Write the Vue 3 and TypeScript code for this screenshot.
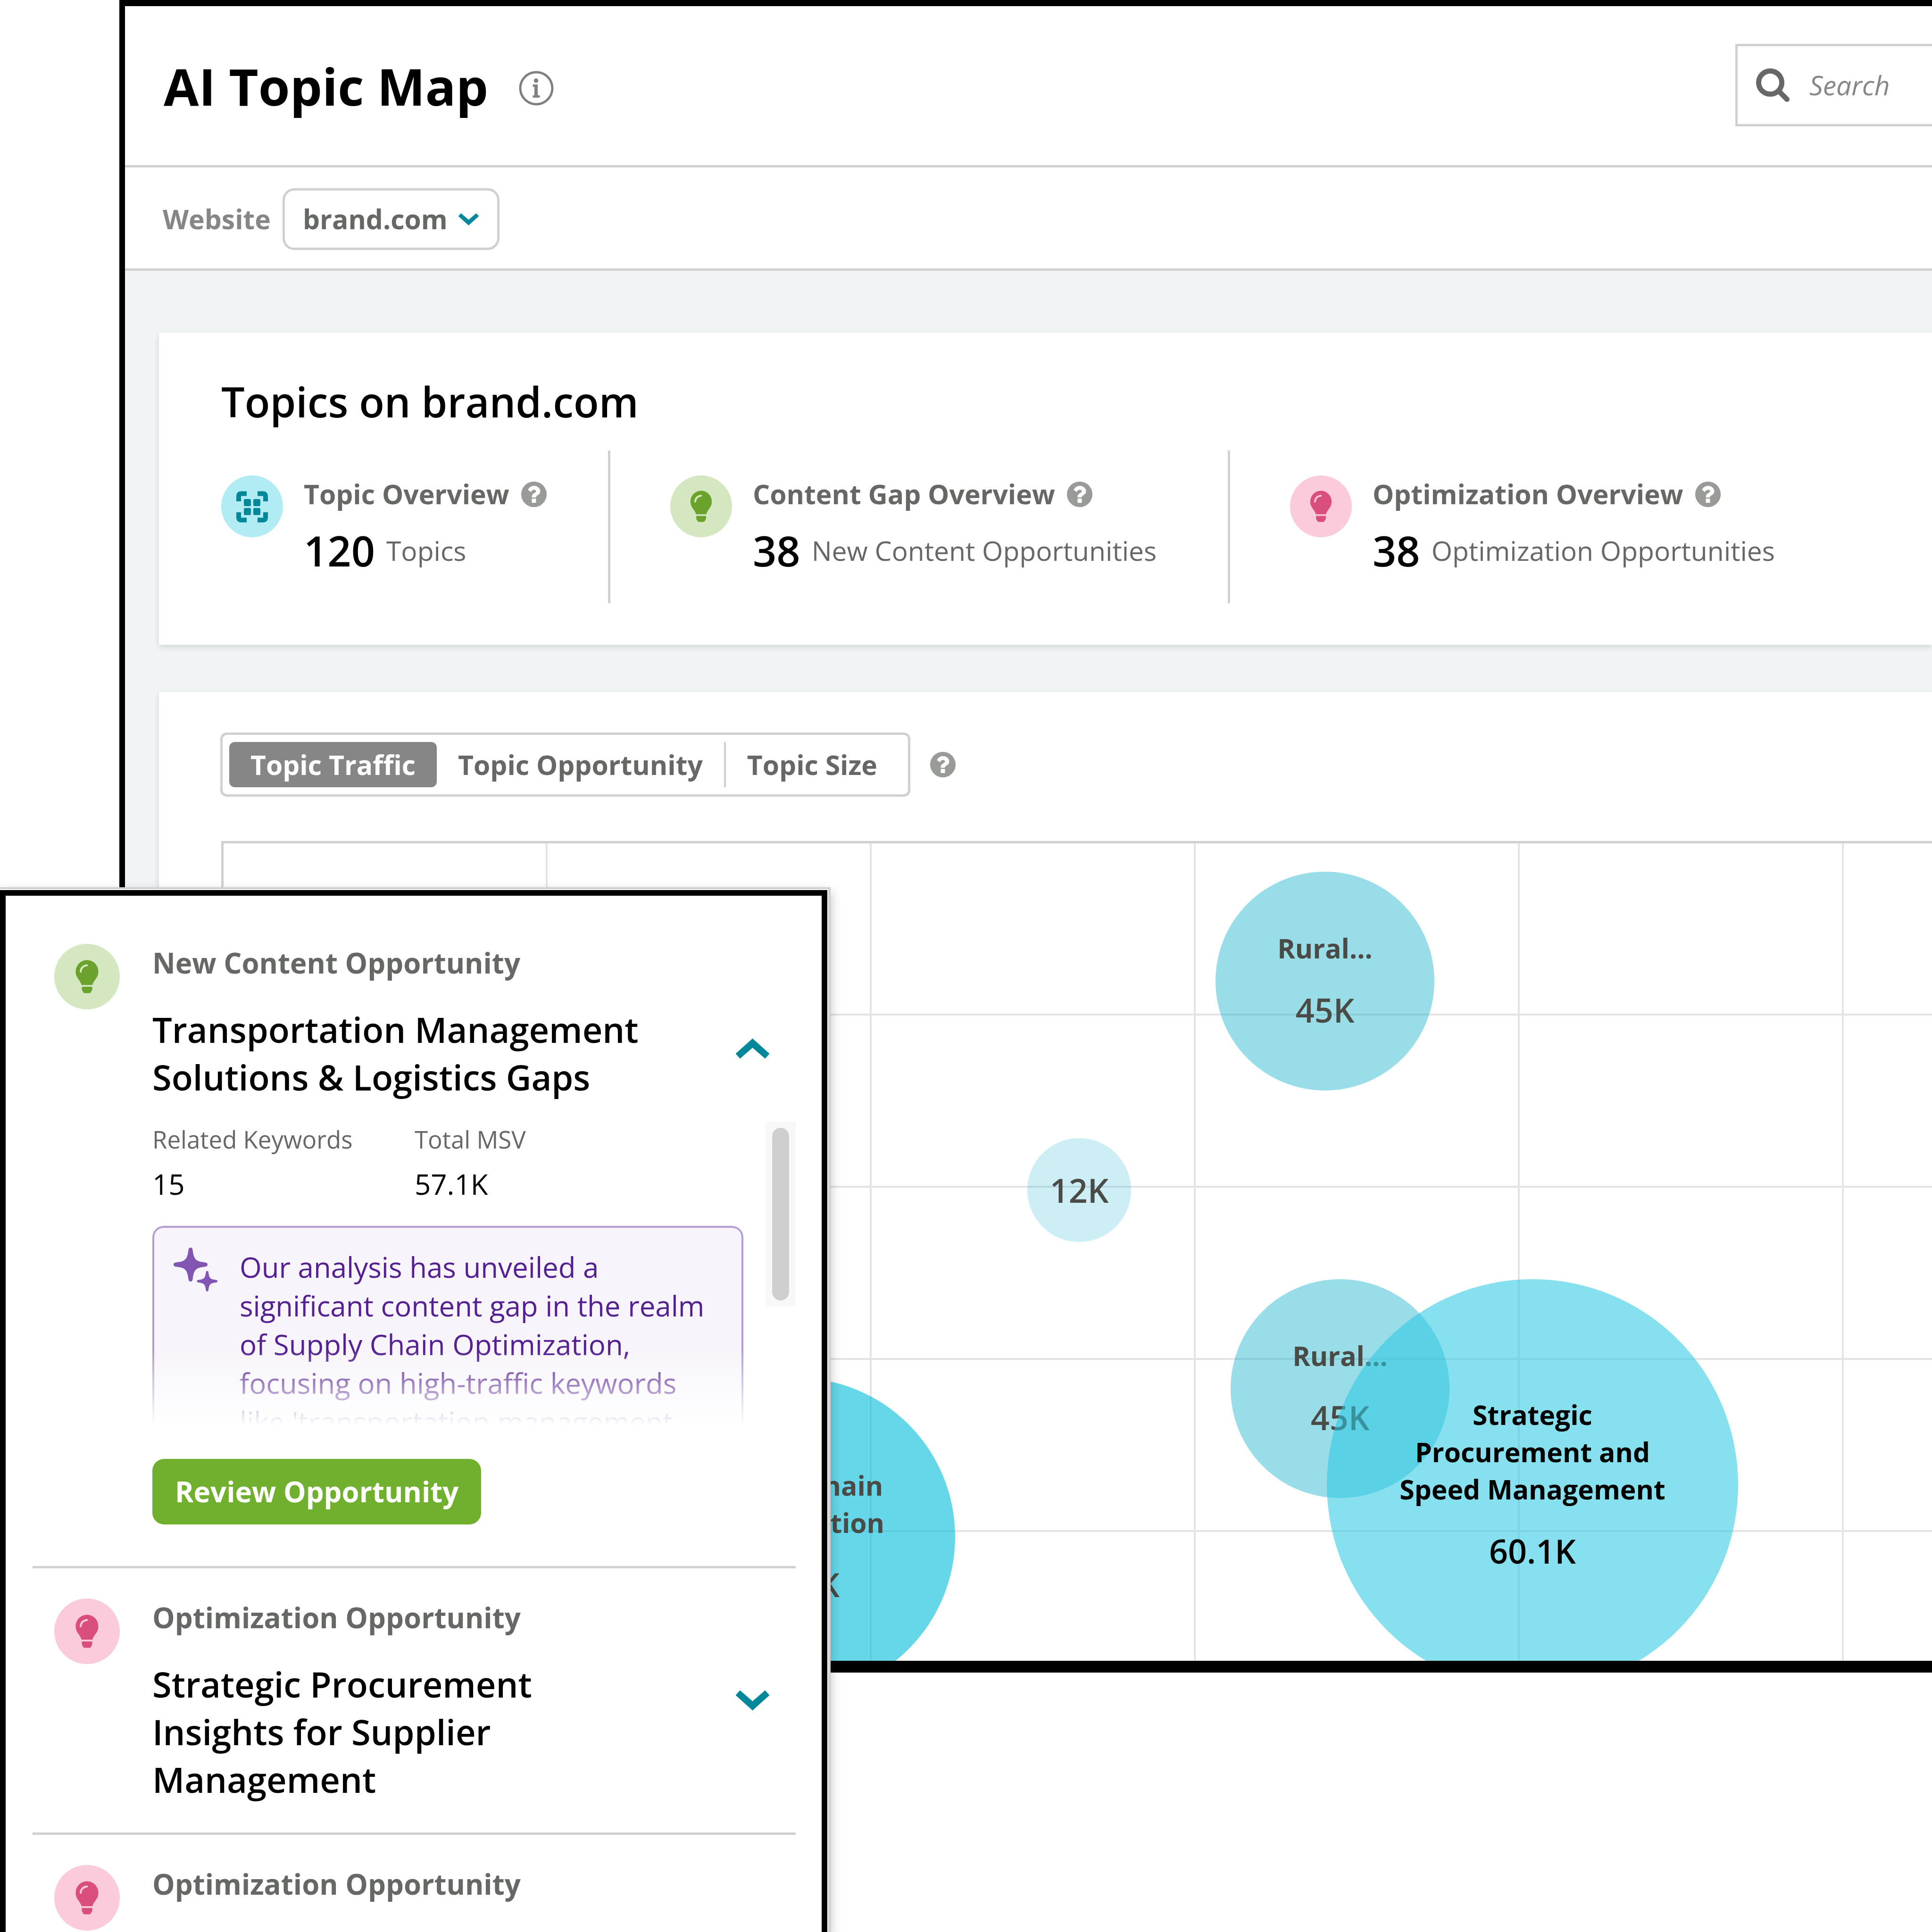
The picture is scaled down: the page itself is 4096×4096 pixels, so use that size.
<script setup lang="ts">
import { ref } from 'vue'

interface Stat {
  kind: 'topic' | 'gap' | 'optimize'
  label: string
  value: number
  unit: string
}

interface Bubble {
  name: string
  value: string
  x: number
  y: number
  size: number
  fill: string
  strong?: boolean
}

interface Opportunity {
  kind: 'gap' | 'optimize'
  label: string
  title: string
  keywords?: string
  msv?: string
  insight?: string
}

const website = ref('brand.com')
const query = ref('')
const metric = ref('Topic Traffic')
const metrics = ['Topic Traffic', 'Topic Opportunity', 'Topic Size']

const stats: Stat[] = [
  { kind: 'topic', label: 'Topic Overview', value: 120, unit: 'Topics' },
  { kind: 'gap', label: 'Content Gap Overview', value: 38, unit: 'New Content Opportunities' },
  { kind: 'optimize', label: 'Optimization Overview', value: 38, unit: 'Optimization Opportunities' },
]

// x and y are bubble centres inside the chart
const bubbles: Bubble[] = [
  { name: 'Rural...', value: '45K', x: 2335, y: 292, size: 464, fill: 'rgba(0, 170, 198, 0.4)' },
  { name: '', value: '12K', x: 1814, y: 735, size: 220, fill: 'rgba(0, 170, 198, 0.2)' },
  { name: 'Supply Chain Optimization', value: '57.1K', x: 1214, y: 1470, size: 674, fill: 'rgba(0, 188, 217, 0.6)' },
  { name: 'Rural...', value: '45K', x: 2367, y: 1156, size: 464, fill: 'rgba(0, 170, 198, 0.4)' },
  { name: 'Strategic Procurement and Speed Management', value: '60.1K', x: 2775, y: 1360, size: 872, fill: 'rgba(43, 201, 225, 0.57)', strong: true },
]

const opportunities: Opportunity[] = [
  {
    kind: 'gap',
    label: 'New Content Opportunity',
    title: 'Transportation Management Solutions & Logistics Gaps',
    keywords: '15',
    msv: '57.1K',
    insight:
      "Our analysis has unveiled a significant content gap in the realm of Supply Chain Optimization, focusing on high-traffic keywords like 'transportation management",
  },
  { kind: 'optimize', label: 'Optimization Opportunity', title: 'Strategic Procurement Insights for Supplier Management' },
  { kind: 'optimize', label: 'Optimization Opportunity', title: '' },
]

const place = (b: Bubble) => ({
  left: `${b.x - b.size / 2}px`,
  top: `${b.y - b.size / 2}px`,
  width: `${b.size}px`,
  height: `${b.size}px`,
  background: b.fill,
})

const helpPath =
  'M1024 1376v-192q0-14-9-23t-23-9h-192q-14 0-23 9t-9 23v192q0 14 9 23t23 9h192q14 0 23-9t9-23zm256-672q0-88-55.5-163t-138.5-116-170-41q-243 0-371 213-15 24 8 42l132 100q7 6 19 6 16 0 25-12 53-68 86-92 34-24 86-24 48 0 85.5 26t37.5 59q0 38-20 61t-68 45q-63 28-115.5 86.5t-52.5 125.5v36q0 14 9 23t23 9h192q14 0 23-9t9-23q0-19 21.5-49.5t54.5-49.5q32-18 49-28.5t46-35 44.5-48 28-60.5 12.5-81zm384 192q0 209-103 385.5t-279.5 279.5-385.5 103-385.5-103-279.5-279.5-103-385.5 103-385.5 279.5-279.5 385.5-103 385.5 103 279.5 279.5 103 385.5z'
const searchPath =
  'M1216 832q0-185-131.5-316.5t-316.5-131.5-316.5 131.5-131.5 316.5 131.5 316.5 316.5 131.5 316.5-131.5 131.5-316.5zm512 832q0 52-38 90t-90 38q-54 0-90-38l-343-342q-179 124-399 124-143 0-273.5-55.5t-225-150-150-225-55.5-273.5 55.5-273.5 150-225 225-150 273.5-55.5 273.5 55.5 225 150 150 225 55.5 273.5q0 220-124 399l343 343q37 37 37 90z'
const bulbPath =
  'M24 0C10.7 0 0 10.7 0 24.5C0 38 9 41 12.5 52.7H35.5C39 41 48 38 48 24.5C48 10.7 37.3 0 24 0ZM13 56.5H35V62C35 63 34.700 63.800 34.200 64.600L31.800 68.500C31.200 69.500 30.300 70 29.200 70H18.800C17.700 70 16.800 69.500 16.200 68.500L13.800 64.600C13.300 63.800 13 63 13 62Z'
const sparkPath =
  'M36 0C38.500 0 40 1.500 40.500 5C43 25 47 29.500 67 31.500C70.500 32 72 33.500 72 36C72 38.500 70.500 40 67 40.500C47 42.500 43 47 40.500 67C40 70.500 38.500 72 36 72C33.500 72 32 70.500 31.500 67C29 47 25 42.500 5 40.500C1.500 40 0 38.500 0 36C0 33.500 1.500 32 5 31.500C25 29.500 29 25 31.500 5C32 1.500 33.500 0 36 0Z'
</script>

<template>
  <div class="page">
    <main class="frame">
      <header class="header">
        <div class="heading">
          <h1>AI Topic Map</h1>
          <svg class="info" viewBox="0 0 74 74" role="img" aria-label="About this page">
            <circle cx="37" cy="37" r="34" fill="none" stroke="currentColor" stroke-width="5" />
            <circle cx="36.500" cy="21" r="4.700" fill="currentColor" />
            <path d="M31 29H40V52H43Q44.500 52 44.500 54V55.500Q44.500 57 43 57H31Q29.500 57 29.500 55.500V54Q29.500 52 31 52H33V34H31Q29.500 34 29.500 32.500V30.500Q29.500 29 31 29Z" fill="currentColor" />
          </svg>
        </div>
        <label class="search">
          <svg class="search-icon" viewBox="64 128 1664 1664" aria-hidden="true"><path :d="searchPath" fill="currentColor" /></svg>
          <input v-model="query" type="text" placeholder="Search" aria-label="Search" />
        </label>
      </header>

      <div class="filters">
        <label for="website">Website</label>
        <div class="select">
          <select id="website" v-model="website">
            <option>brand.com</option>
          </select>
          <svg class="select-arrow" viewBox="0 0 71 42" aria-hidden="true"><path d="M9 1L35.500 24L62 1L70 10L35.500 41L1 10Z" fill="currentColor" stroke="currentColor" stroke-width="2" stroke-linejoin="round" /></svg>
        </div>
      </div>

      <div class="content">
        <section class="card summary">
          <h2>Topics on brand.com</h2>
          <div class="stats">
            <div v-for="s in stats" :key="s.label" class="stat">
              <svg class="stat-icon" :class="s.kind" viewBox="0 0 139 139" aria-hidden="true">
                <circle class="disc" cx="69.500" cy="69.500" r="69.500" />
                <g v-if="s.kind === 'topic'" transform="scale(1.061)">
                  <path d="M54 38.500H42Q37 38.500 37 43.500V55M77 38.500H89Q94 38.500 94 43.500V55M54 94.500H42Q37 94.500 37 89.500V78M77 94.500H89Q94 94.500 94 89.500V78" fill="none" stroke="currentColor" stroke-width="10" />
                  <rect x="48" y="50" width="15" height="15" rx="3" fill="currentColor" />
                  <rect x="68" y="50" width="15" height="15" rx="3" fill="currentColor" />
                  <rect x="48" y="69" width="15" height="15" rx="3" fill="currentColor" />
                  <rect x="68" y="69" width="15" height="15" rx="3" fill="currentColor" />
                </g>
                <g v-else transform="translate(45.500 34.500)">
                  <path :d="bulbPath" fill="currentColor" />
                  <path class="shine" d="M10.500 24.500Q11.500 12.500 24 11" />
                </g>
              </svg>
              <div>
                <p class="stat-label">
                  {{ s.label }}
                  <svg class="help" viewBox="128 128 1536 1536" role="img" aria-label="Help"><path :d="helpPath" fill="currentColor" /></svg>
                </p>
                <p class="stat-value"><strong>{{ s.value }}</strong><span>{{ s.unit }}</span></p>
              </div>
            </div>
          </div>
        </section>

        <section class="card map">
          <div class="toolbar">
            <div class="segments">
              <button v-for="m in metrics" :key="m" type="button" :class="{ active: m === metric }" @click="metric = m">{{ m }}</button>
            </div>
            <svg class="help" viewBox="128 128 1536 1536" role="img" aria-label="Help"><path :d="helpPath" fill="currentColor" /></svg>
          </div>
          <div class="chart">
            <div v-for="(b, i) in bubbles" :key="i" class="bubble" :class="{ strong: b.strong }" :style="place(b)">
              <span v-if="b.name" class="bubble-name">{{ b.name }}</span>
              <span class="bubble-value">{{ b.value }}</span>
            </div>
          </div>
        </section>
      </div>
    </main>

    <aside class="panel">
      <div class="panel-body">
        <article v-for="(o, i) in opportunities" :key="i" class="item">
          <svg class="item-icon" :class="o.kind" viewBox="0 0 139 139" aria-hidden="true">
            <circle class="disc" cx="69.500" cy="69.500" r="69.500" />
            <g transform="translate(45.500 34.500)">
              <path :d="bulbPath" fill="currentColor" />
              <path class="shine" d="M10.500 24.500Q11.500 12.500 24 11" />
            </g>
          </svg>
          <div class="item-content">
            <p class="item-label">{{ o.label }}</p>
            <div v-if="o.title" class="item-head">
              <h3>{{ o.title }}</h3>
              <button type="button" class="toggle" :aria-label="o.insight ? 'Collapse' : 'Expand'">
                <svg viewBox="0 0 71 48" aria-hidden="true">
                  <path v-if="o.insight" d="M9 47L35.500 24L62 47L70 38L35.500 7L1 38Z" fill="currentColor" stroke="currentColor" stroke-width="2" stroke-linejoin="round" />
                  <path v-else d="M9 1L35.500 24L62 1L70 10L35.500 41L1 10Z" fill="currentColor" stroke="currentColor" stroke-width="2" stroke-linejoin="round" />
                </svg>
              </button>
            </div>
            <template v-if="o.insight">
              <div class="details">
                <div class="details-body">
                  <dl>
                    <div><dt>Related Keywords</dt><dd>{{ o.keywords }}</dd></div>
                    <div><dt>Total MSV</dt><dd>{{ o.msv }}</dd></div>
                  </dl>
                  <div class="insight">
                    <svg class="sparkles" viewBox="0 0 93 93" aria-hidden="true">
                      <path :d="sparkPath" fill="currentColor" />
                      <path :d="sparkPath" fill="currentColor" transform="translate(49.500 49.500) scale(0.604)" />
                    </svg>
                    <p>{{ o.insight }}</p>
                  </div>
                </div>
                <div class="scroll-track"><div class="scroll-thumb"></div></div>
              </div>
              <button type="button" class="review">Review Opportunity</button>
            </template>
          </div>
        </article>
      </div>
    </aside>
  </div>
</template>

<style>
body {
  background: #fff;
}
</style>

<style scoped>
.page {
  position: relative;
  box-sizing: border-box;
  min-height: 100vh;
  padding-left: 253px;
  overflow: hidden;
  font-family: 'Open Sans', 'Noto Sans', sans-serif;
  font-size: 57px;
  line-height: 79px;
  color: #000;
}
.page * {
  box-sizing: border-box;
}
h1, h2, h3, p, dl, dd {
  margin: 0;
}
svg {
  display: block;
  flex: none;
}
button, input, select {
  margin: 0;
  font: inherit;
  color: inherit;
}

.frame {
  border: solid #000;
  border-width: 13px 0 25px 12px;
  background: #f0f4f5;
}

.header {
  display: flex;
  align-items: center;
  justify-content: space-between;
  height: 342px;
  padding: 0 0 2px 82px;
  border-bottom: 5px solid #d0d0d0;
  background: #fff;
}
.heading {
  display: flex;
  align-items: center;
  gap: 65px;
  padding-top: 4px;
}
h1 {
  font-size: 108px;
  font-weight: 700;
  line-height: 148px;
}
.info {
  width: 74px;
  height: 74px;
  margin-top: 8px;
  color: #808080;
}
.search {
  display: flex;
  align-items: center;
  gap: 42px;
  width: 417px;
  height: 175px;
  padding-left: 39px;
  border: 5px solid #d0d0d0;
  border-right: 0;
}
.search-icon {
  width: 71px;
  height: 71px;
  color: #666866;
}
.search input {
  flex: 1;
  min-width: 0;
  padding: 0;
  border: 0;
  background: none;
  font-style: italic;
  outline: none;
}
.search input::placeholder {
  color: #868686;
  opacity: 1;
}

.filters {
  display: flex;
  align-items: center;
  gap: 25px;
  height: 219px;
  padding: 5px 0 0 80px;
  border-bottom: 5px solid #d0d0d0;
  background: #fff;
  font-weight: 700;
  color: #868686;
}
.select {
  position: relative;
  width: 460px;
}
.select select {
  display: block;
  width: 100%;
  height: 131px;
  padding: 0 38px;
  border: 5px solid #d0d0d0;
  border-radius: 25px;
  background: #fff;
  color: #666866;
  appearance: none;
}
.select-arrow {
  position: absolute;
  top: 53px;
  right: 44px;
  width: 43px;
  height: 26px;
  color: #00889a;
  pointer-events: none;
}

.content {
  display: flex;
  flex-direction: column;
  gap: 100px;
  padding: 131px 0 0 72px;
}
.card {
  padding-left: 132px;
  background: #fff;
  box-shadow: 0 5px 12px rgba(0, 0, 0, 0.12);
}
.summary {
  padding-top: 86px;
  padding-bottom: 88px;
}
h2 {
  margin-bottom: 44px;
  font-size: 88px;
  font-weight: 600;
  line-height: 120px;
}
.stats {
  display: grid;
  grid-template-columns: 820px 1314px 1fr;
}
.stat {
  display: flex;
  gap: 44px;
  height: 324px;
  padding-top: 53px;
}
.stat + .stat {
  padding-left: 127px;
  border-left: 5px solid #d0d0d0;
}
.stat-icon {
  width: 131px;
  height: 131px;
}
.disc {
  fill: var(--tint);
}
.shine {
  fill: none;
  stroke: var(--tint);
  stroke-width: 4;
  stroke-linecap: round;
}
.topic {
  --tint: #b1ebf3;
  color: #00889a;
}
.gap {
  --tint: #d5e7c0;
  color: #6aa22b;
}
.optimize {
  --tint: #f9cbdb;
  color: #da4e7e;
}
.stat-label {
  display: flex;
  align-items: center;
  gap: 25px;
  font-weight: 700;
  color: #666866;
}
.help {
  width: 54px;
  height: 54px;
  color: #999b99;
}
.stat-value {
  display: flex;
  align-items: center;
  gap: 24px;
  margin-top: 20px;
  color: #666866;
  line-height: 120px;
  white-space: nowrap;
}
.stat-value strong {
  font-size: 88px;
  font-weight: 600;
  color: #000;
}

.map {
  padding-top: 86px;
}
.toolbar {
  display: flex;
  align-items: center;
  gap: 42px;
  margin-bottom: 94px;
}
.segments {
  display: flex;
  height: 136px;
  margin-left: -2px;
  padding: 15px 20px 15px 14px;
  border: 5px solid #d0d0d0;
  border-radius: 14px;
}
.segments button {
  padding: 0 45px;
  border: 0;
  background: none;
  font-weight: 700;
  color: #666866;
  cursor: pointer;
}
.segments button:last-child {
  border-left: 4px solid #d0d0d0;
}
.segments .active {
  border-radius: 12px;
  background: #868686;
  color: #fff;
}

.chart {
  position: relative;
  height: 1738px;
  overflow: hidden;
  border: solid #d0d0d0;
  border-width: 5px 0 0 5px;
  background:
    linear-gradient(to right, transparent 683px, #e4e4e4 683px) 0 0 / 687px 100%,
    linear-gradient(to bottom, transparent 361px, #e4e4e4 361px) 0 0 / 100% 365px;
}
.bubble {
  position: absolute;
  display: flex;
  flex-direction: column;
  align-items: center;
  justify-content: center;
  gap: 43px;
  border-radius: 50%;
  color: #4a4a46;
  text-align: center;
}
.bubble.strong {
  color: #000;
}
.bubble-name {
  max-width: 600px;
  padding: 0 10px;
  font-weight: 700;
}
.bubble:not(.strong) .bubble-name {
  max-width: 480px;
}
.bubble-value {
  font-size: 70px;
  font-weight: 600;
  line-height: 96px;
}

.panel {
  position: absolute;
  top: 1881px;
  bottom: 0;
  left: 0;
  width: 1761px;
  padding: 2px 2px 0 0;
  border: solid #d0d0d0;
  border-width: 4px 5px 0 0;
  background: #fff;
  box-shadow: 0 10px 22px rgba(0, 0, 0, 0.25);
}
.panel-body {
  min-height: 100%;
  padding: 38px 55px 0 57px;
  border: solid #000;
  border-width: 12px 12px 0;
}
.item {
  display: flex;
  gap: 69px;
  padding: 64px 0 62px 46px;
}
.item + .item {
  border-top: 5px solid #d0d0d0;
}
.item:first-child {
  padding-bottom: 88px;
}
.item-icon {
  width: 139px;
  height: 139px;
}
.item-content {
  flex: 1;
  min-width: 0;
}
.item-label {
  font-size: 60px;
  font-weight: 700;
  line-height: 80px;
  color: #666866;
}
.item-head {
  display: flex;
  align-items: flex-start;
  justify-content: space-between;
  margin-top: 51px;
  padding-right: 56px;
}
h3 {
  max-width: 1070px;
  font-size: 74px;
  font-weight: 600;
  line-height: 101px;
}
.toggle {
  margin-top: 64px;
  padding: 0;
  border: 0;
  background: none;
  color: #00889a;
  cursor: pointer;
}
.toggle svg {
  width: 71px;
  height: 48px;
}
.details {
  display: flex;
  align-items: flex-start;
  justify-content: space-between;
  height: 644px;
  margin-top: 44px;
  overflow: hidden;
}
.details-body {
  width: 1253px;
}
dl {
  display: grid;
  grid-template-columns: 556px 1fr;
}
dt {
  font-size: 51px;
  line-height: 75px;
  color: #666866;
}
dd {
  margin-top: 18px;
  font-size: 60px;
}
.insight {
  display: flex;
  gap: 47px;
  height: 423px;
  margin-top: 49px;
  padding: 42px 41px 0;
  overflow: hidden;
  border: solid #b39bd3;
  border-width: 4px 4px 0;
  border-radius: 24px 24px 0 0;
  background: #f7f5fb;
  color: #552092;
  font-size: 60px;
  line-height: 82px;
  -webkit-mask-image: linear-gradient(#000 62%, transparent);
  mask-image: linear-gradient(#000 62%, transparent);
}
.sparkles {
  width: 93px;
  height: 93px;
  color: #8255b3;
}
.scroll-track {
  width: 64px;
  height: 392px;
  padding: 13px 14px;
  background: #f8f8f8;
}
.scroll-thumb {
  height: 100%;
  border-radius: 18px;
  background: #cfcfcf;
}
.review {
  display: block;
  height: 139px;
  margin-top: 71px;
  padding: 0 48px;
  border: 0;
  border-radius: 25px;
  background: #71b02f;
  color: #fff;
  font-size: 60px;
  font-weight: 700;
  cursor: pointer;
}
</style>
